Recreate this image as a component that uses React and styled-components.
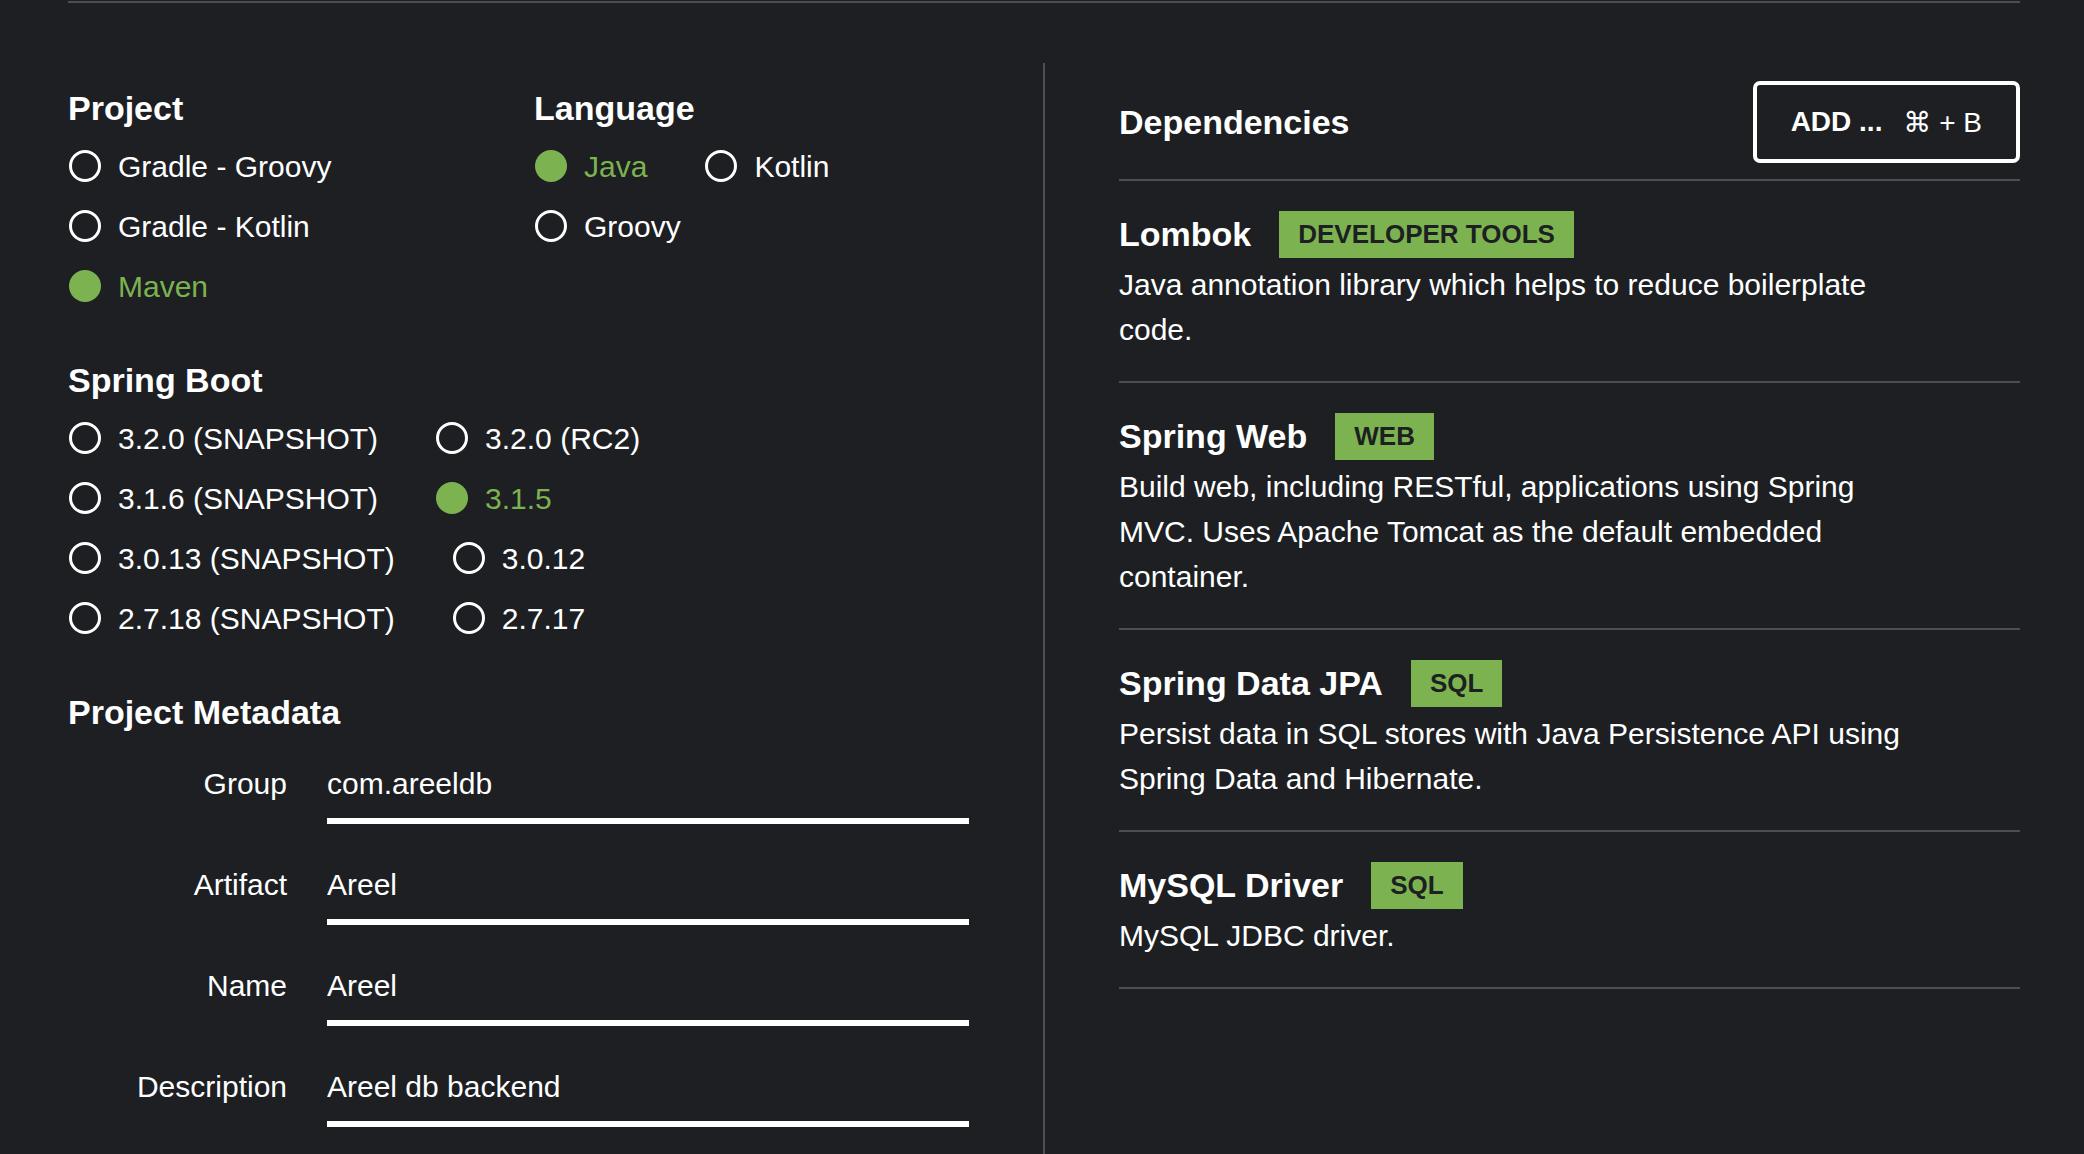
import React from 'react';
import styled, { createGlobalStyle } from 'styled-components';

const GREEN = '#7cb350';
const BG = '#1d1f23';
const LINE = '#4b4e52';

const GlobalStyle = createGlobalStyle`
  html, body {
    margin: 0;
    padding: 0;
    background: ${BG};
    color: #ffffff;
    font-family: "Liberation Sans", Arial, Helvetica, sans-serif;
  }
  * {
    box-sizing: border-box;
  }
`;

const projectRows = [
  [ { label: 'Gradle - Groovy' } ],
  [ { label: 'Gradle - Kotlin' } ],
  [ { label: 'Maven', checked: true } ]
];

const languageRows = [
  [ { label: 'Java', checked: true }, { label: 'Kotlin' } ],
  [ { label: 'Groovy' } ]
];

const bootRows = [
  [ { label: '3.2.0 (SNAPSHOT)' }, { label: '3.2.0 (RC2)' } ],
  [ { label: '3.1.6 (SNAPSHOT)' }, { label: '3.1.5', checked: true } ],
  [ { label: '3.0.13 (SNAPSHOT)' }, { label: '3.0.12' } ],
  [ { label: '2.7.18 (SNAPSHOT)' }, { label: '2.7.17' } ]
];

const metadata = [
  { label: 'Group', value: 'com.areeldb' },
  { label: 'Artifact', value: 'Areel' },
  { label: 'Name', value: 'Areel' },
  { label: 'Description', value: 'Areel db backend' }
];

const dependencies = [
  {
    name: 'Lombok',
    tag: 'DEVELOPER TOOLS',
    description: 'Java annotation library which helps to reduce boilerplate code.'
  },
  {
    name: 'Spring Web',
    tag: 'WEB',
    description: 'Build web, including RESTful, applications using Spring MVC. Uses Apache Tomcat as the default embedded container.'
  },
  {
    name: 'Spring Data JPA',
    tag: 'SQL',
    description: 'Persist data in SQL stores with Java Persistence API using Spring Data and Hibernate.'
  },
  {
    name: 'MySQL Driver',
    tag: 'SQL',
    description: 'MySQL JDBC driver.'
  }
];

function RadioGroup({ rows }) {
  return (
    <div>
      { rows.map((row, i) => (
        <RadioRow key={ i }>
          { row.map(option => (
            <RadioOption key={ option.label } $checked={ option.checked }>
              <RadioDot $checked={ option.checked } />
              { option.label }
            </RadioOption>
          )) }
        </RadioRow>
      )) }
    </div>
  );
}

export default function App() {
  return (
    <>
      <GlobalStyle />
      <Page>
        <TopRule />
        <Main>
          <LeftColumn>
            <TwoCols>
              <section>
                <SectionTitle>Project</SectionTitle>
                <RadioGroup rows={ projectRows } />
              </section>
              <section>
                <SectionTitle>Language</SectionTitle>
                <RadioGroup rows={ languageRows } />
              </section>
            </TwoCols>

            <Section>
              <SectionTitle>Spring Boot</SectionTitle>
              <RadioGroup rows={ bootRows } />
            </Section>

            <Section>
              <SectionTitle>Project Metadata</SectionTitle>
              <Fields>
                { metadata.map(field => (
                  <FieldRow key={ field.label }>
                    <FieldLabel>{ field.label }</FieldLabel>
                    <FieldInput readOnly defaultValue={ field.value } />
                  </FieldRow>
                )) }
              </Fields>
            </Section>
          </LeftColumn>

          <RightColumn>
            <DepsHeader>
              <SectionTitle>Dependencies</SectionTitle>
              <AddButton>
                <strong>ADD ...</strong>
                <span>⌘ + B</span>
              </AddButton>
            </DepsHeader>
            { dependencies.map(dep => (
              <DepItem key={ dep.name }>
                <DepHead>
                  <DepName>{ dep.name }</DepName>
                  <Badge>{ dep.tag }</Badge>
                </DepHead>
                <DepText>{ dep.description }</DepText>
              </DepItem>
            )) }
          </RightColumn>
        </Main>
      </Page>
    </>
  );
}

const Page = styled.div`
  width: 1952px;
  margin-left: 68px;
  padding-top: 1px;
`;

const TopRule = styled.div`
  height: 2px;
  background: ${LINE};
`;

const Main = styled.main`
  display: grid;
  grid-template-columns: 977px 1fr;
  margin-top: 60px;
  min-height: calc(100vh - 63px);
`;

const LeftColumn = styled.div`
  padding-top: 25px;
  border-right: 2px solid ${LINE};
`;

const TwoCols = styled.div`
  display: grid;
  grid-template-columns: 466px 1fr;
`;

const Section = styled.section`
  margin-top: 44px;
`;

const SectionTitle = styled.h2`
  margin: 0 0 8px;
  font-size: 34px;
  line-height: 40px;
  font-weight: 700;
  color: #ffffff;
`;

const RadioRow = styled.div`
  display: flex;
  align-items: center;
  gap: 57px;
  height: 60px;
`;

const RadioOption = styled.label`
  display: flex;
  align-items: center;
  gap: 17px;
  font-size: 30px;
  line-height: 45px;
  color: ${ p => p.$checked ? GREEN : '#ffffff' };
  white-space: nowrap;
`;

const RadioDot = styled.span`
  width: 32px;
  height: 32px;
  margin-left: 1px;
  border-radius: 50%;
  flex-shrink: 0;
  background: ${ p => p.$checked ? GREEN : 'transparent' };
  border: ${ p => p.$checked ? 'none' : '3.5px solid #ffffff' };
`;

const Fields = styled.div`
  display: flex;
  flex-direction: column;
  gap: 38px;
  margin-top: 29px;
`;

const FieldRow = styled.div`
  display: flex;
  align-items: flex-start;
  gap: 40px;
`;

const FieldLabel = styled.span`
  width: 219px;
  text-align: right;
  font-size: 30px;
  line-height: 45px;
  color: #ffffff;
`;

const FieldInput = styled.input`
  width: 642px;
  height: 63px;
  padding: 0 0 12px;
  margin: 0;
  border: none;
  border-bottom: 6px solid #ffffff;
  background: transparent;
  color: #ffffff;
  font-family: "Liberation Sans", Arial, Helvetica, sans-serif;
  font-size: 30px;
  line-height: 45px;
  outline: none;
`;

const RightColumn = styled.div`
  padding: 18px 0 0 74px;
`;

const DepsHeader = styled.div`
  display: flex;
  justify-content: space-between;
  align-items: center;
  padding-bottom: 16px;
  border-bottom: 2px solid ${LINE};

  h2 {
    margin: 0;
  }
`;

const AddButton = styled.button`
  display: flex;
  align-items: center;
  gap: 21px;
  height: 82px;
  padding: 0 34px;
  border: 4px solid #ffffff;
  border-radius: 7px;
  background: transparent;
  color: #ffffff;
  font-family: "Liberation Sans", Arial, Helvetica, sans-serif;
  font-size: 28px;
  cursor: pointer;

  strong {
    font-weight: 700;
  }

  span {
    font-family: "Liberation Sans", "DejaVu Sans", sans-serif;
    font-weight: 400;
  }
`;

const DepItem = styled.div`
  padding: 30px 0 29px;
  border-bottom: 2px solid ${LINE};
`;

const DepHead = styled.div`
  display: flex;
  align-items: center;
  gap: 28px;
  height: 47px;
`;

const DepName = styled.span`
  font-size: 34px;
  font-weight: 700;
  color: #ffffff;
`;

const Badge = styled.span`
  display: inline-flex;
  align-items: center;
  height: 47px;
  padding: 0 19px;
  background: ${GREEN};
  color: ${BG};
  font-size: 26px;
  font-weight: 700;
`;

const DepText = styled.p`
  margin: 4px 0 0;
  max-width: 800px;
  font-size: 30px;
  line-height: 45px;
  color: #ffffff;
`;
